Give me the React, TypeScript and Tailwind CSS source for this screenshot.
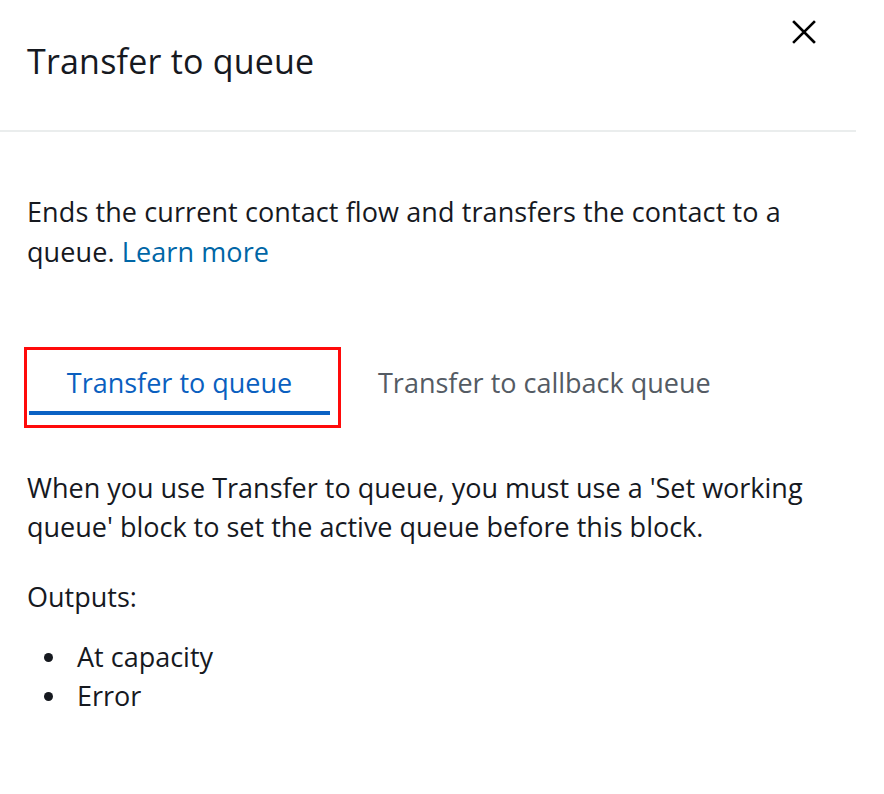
import React from 'react';

const font = { fontFamily: '"Open Sans", "Noto Sans", sans-serif' };

const Bullet = ({ text }: { text: string }) => (
  <li className="flex items-center h-[39px]">
    <span className="ml-[17px] w-[9px] h-[9px] rounded-full bg-[#16191f]" />
    <span className="ml-[24px]">{text}</span>
  </li>
);

export default function App() {
  return (
    <div className="w-[884px] h-[794px] bg-white text-[#16191f]" style={font}>
      <div className="w-[856px]">
        {/* header */}
        <div className="h-[130px] flex justify-between items-start border-b-2 border-[#eaeded] box-content">
          <h1 className="mt-[41px] ml-[27px] text-[34px] leading-[40px] font-normal tracking-[0.2px]">
            Transfer to queue
          </h1>
          <button className="mt-[20px] mr-[40px] w-[24px] h-[24px] flex items-center justify-center">
            <svg viewBox="0 0 24 24" className="w-[24px] h-[24px]" fill="none" stroke="#000" strokeWidth="2.6" strokeLinecap="square">
              <path d="M2 2 L22 22 M22 2 L2 22" />
            </svg>
          </button>
        </div>

        <div className="px-[27px]">
          <p className="mt-[60px] text-[27px] leading-[40px] tracking-[0.1px]">
            Ends the current contact flow and transfers the contact to a queue. <a className="text-[#0066a6]">Learn more</a>
          </p>

          {/* tabs */}
          <div className="mt-[75px] ml-[-3px] flex items-start">
            <div className="border-[3px] border-[#ff0a0a] w-[317px] h-[81px] pt-[13px] pl-[2px]">
              <div className="w-[301px] h-[52px] border-b-[4px] border-[#0a62c4] text-center text-[27px] leading-[40px] text-[#0a5fbf]">
                Transfer to queue
              </div>
            </div>
            <div className="ml-[37px] pt-[16px] text-[27px] leading-[40px] text-[#545b64]">
              Transfer to callback queue
            </div>
          </div>

          <p className="mt-[40px] text-[27px] leading-[39px]">
            When you use Transfer to queue, you must use a 'Set working queue' block to set the active queue before this block.
          </p>

          <p className="mt-[31px] text-[27px] leading-[40px]">Outputs:</p>

          <ul className="mt-[21px] text-[27px]">
            <Bullet text="At capacity" />
            <Bullet text="Error" />
          </ul>
        </div>
      </div>
    </div>
  );
}
